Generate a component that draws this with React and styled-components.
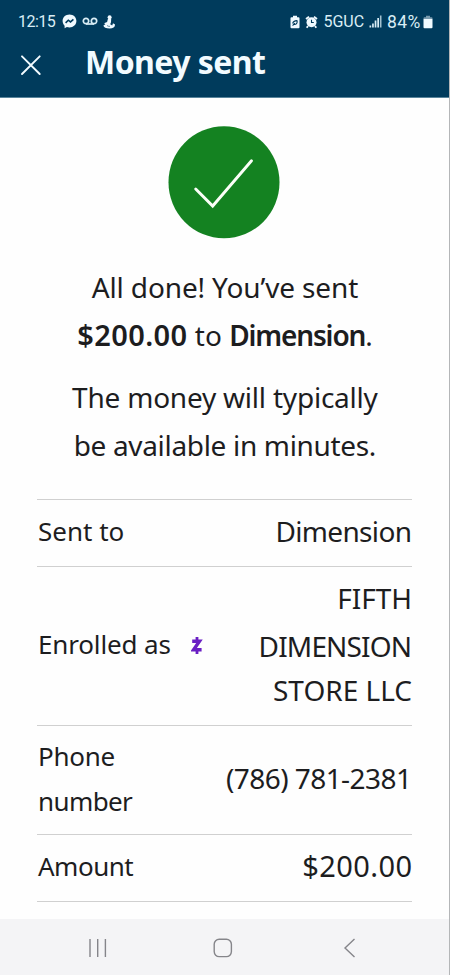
import React from "react";
import styled, { createGlobalStyle } from "styled-components";

const Global = createGlobalStyle`
  * { box-sizing: border-box; }
  body { margin: 0; background: #fefefe; }
`;

const Screen = styled.div`
  width: 450px;
  height: 975px;
  display: flex;
  flex-direction: column;
  background: #fefefe;
  border-right: 1px solid #b4b6b8;
  color: #1d1d1f;
  font-family: "Noto Sans", sans-serif;
  overflow: hidden;
`;

const Header = styled.header`
  height: 98px;
  flex: none;
  background: #003b5c;
  border-bottom: 1px solid #58849b;
  color: #f2fbff;
`;

const StatusBar = styled.div`
  height: 42px;
  padding: 1px 16px 0 18px;
  display: flex;
  align-items: center;
  justify-content: space-between;
  font-family: Roboto, sans-serif;
  color: #d9edf5;
`;

const StatusGroup = styled.div`
  display: flex;
  align-items: center;
  gap: ${(p) => p.$gap}px;
`;

const StatusText = styled.span`
  font-size: ${(p) => p.$size}px;
  letter-spacing: ${(p) => p.$ls || 0}px;
  margin-left: ${(p) => p.$ml || 0}px;
  margin-right: ${(p) => p.$mr || 0}px;
  line-height: 20px;
`;

const TitleRow = styled.div`
  height: 42px;
  display: flex;
  align-items: center;
  padding-left: 20px;
`;

const Close = styled.button`
  width: 22px;
  height: 22px;
  padding: 0;
  margin-top: 3px;
  border: 0;
  background: none;
  color: inherit;
  display: flex;
`;

const Title = styled.h1`
  margin: -3px 0 0 43px;
  font-size: 32px;
  line-height: 42px;
  font-weight: 700;
  letter-spacing: -0.55px;
  white-space: nowrap;
`;

const Content = styled.main`
  flex: 1;
  display: flex;
  flex-direction: column;
  padding: 28px 37px 0;
`;

const Badge = styled.div`
  width: 112px;
  height: 113px;
  align-self: center;
  margin-right: 1px;
  svg { display: block; }
`;

const Message = styled.p`
  margin: ${(p) => p.$top}px 0 0;
  padding-left: 1px;
  display: flex;
  flex-direction: column;
  align-items: center;
`;

const Line = styled.span`
  display: block;
  font-size: ${(p) => p.$size || 28}px;
  line-height: ${(p) => p.$lh || 48}px;
  letter-spacing: ${(p) => p.$ls || 0}px;
  margin-right: ${(p) => -(p.$ls || 0)}px;
  white-space: nowrap;
`;

const Strong = styled.strong`
  font-weight: 600;
  font-size: ${(p) => p.$size || 28}px;
  letter-spacing: ${(p) => p.$ls}px;
`;

const Details = styled.dl`
  margin: 30px 0 0;
  border-top: 1px solid #d0d0d0;
`;

const Row = styled.div`
  height: ${(p) => p.$h}px;
  display: flex;
  align-items: center;
  justify-content: space-between;
  border-bottom: 1px solid #d0d0d0;
`;

const Label = styled.dt`
  display: flex;
  align-items: center;
  gap: 20px;
  padding: 0 0 2px 1px;
`;

const Stack = styled.div`
  display: flex;
  flex-direction: column;
`;

const LabelLine = styled.span`
  display: block;
  font-size: 26px;
  line-height: 45.5px;
  letter-spacing: ${(p) => p.$ls || 0}px;
  white-space: nowrap;
`;

const Value = styled.dd`
  margin: 0;
  padding-bottom: ${(p) => p.$pb || 4}px;
  display: flex;
  flex-direction: column;
  align-items: flex-end;
`;

const NavBar = styled.nav`
  height: 56px;
  flex: none;
  background: #f4f4f6;
  display: flex;
  align-items: center;
  padding: 2px 93px 0 87px;
`;

const NavButton = styled.button`
  display: flex;
  padding: 0;
  border: 0;
  background: none;
  margin-left: ${(p) => p.$ml || 0}px;
`;

const MessengerIcon = () => (
  <svg width="15" height="15" viewBox="0 0 15 15">
    <path d="M7.500 .6C3.600.6.6 3.400.6 7.100c0 1.900.8 3.500 2 4.600v2.500l2.300-1.100c.8.200 1.700.4 2.600.4 3.900 0 6.900-2.700 6.900-6.400S11.400.6 7.500.6Z" fill="#f0faff" />
    <path d="M3.600 8.800 6.300 6.200l2.200 1.700 2.900-2.500" fill="none" stroke="#003b5c" strokeWidth="1.600" />
  </svg>
);

const VoicemailIcon = () => (
  <svg width="16" height="9" viewBox="0 0 16 9" fill="none" stroke="currentColor" strokeWidth="1.700">
    <circle cx="4" cy="4" r="2.700" />
    <circle cx="12" cy="4" r="2.700" />
    <path d="M4 7h8" />
  </svg>
);

const FigureIcon = () => (
  <svg width="12" height="14" viewBox="0 0 12 14" fill="#f0faff">
    <circle cx="6.600" cy="2.300" r="2" />
    <path d="M5 3.500h3.200l-.2 3.700-.8 2 2 1.400L10 8.200l2 1.200c.1 2.700-1.800 4.200-5.300 4.200C3 13.600.6 12.700.4 10.600l2-1.400-1.300-.9 3-1.300Z" />
    <path d="M4 10.400c1 .9 2 1.100 3 .9" fill="none" stroke="#003b5c" strokeWidth=".6" />
  </svg>
);

const BatterySaverIcon = () => (
  <svg width="10" height="14" viewBox="0 0 10 14">
    <path d="M3 .8h4v1.400h1.500q1 0 1 1v9q0 1-1 1h-7q-1 0-1-1v-9q0-1 1-1H3Z" fill="#f0faff" />
    <path d="M7.200 5.600c.2 3-1.300 4.500-3.900 3.700M2.700 8.500c.2-1.800 1.700-2.800 4.500-2.900M2.600 10.700l2.200-2.500" fill="none" stroke="#003b5c" strokeWidth="1.100" />
  </svg>
);

const AlarmIcon = () => (
  <svg width="13" height="14" viewBox="0 0 13 14">
    <path d="M1 4 4 1.600M12 4 9 1.600M3 11l-1.300 1.800M10 11l1.300 1.800" stroke="#f0faff" strokeWidth="1.800" />
    <circle cx="6.500" cy="7.300" r="5" fill="#f0faff" />
    <path d="M6.500 4.800v2.700h2.300" fill="none" stroke="#003b5c" strokeWidth="1.100" />
  </svg>
);

const SignalIcon = () => (
  <svg width="13" height="13" viewBox="0 0 13 13" fill="currentColor">
    <path d="M.5 10.500h1.700v2H.5zM3.100 8.500h1.700v4H3.100zM5.700 5.500h1.700v7H5.700zM8.300 3H10v9.500H8.300z" />
    <path d="M10.900.5h1.600v12h-1.600z" opacity=".75" />
  </svg>
);

const BatteryIcon = () => (
  <svg width="10" height="14" viewBox="0 0 10 14" fill="#f0faff">
    <path d="M3 .8h4v1.400h1.500q1 0 1 1V4H.5v-.8q0-1 1-1H3Z" opacity=".5" />
    <path d="M.5 4h9v8.200q0 1-1 1h-7q-1 0-1-1Z" />
  </svg>
);

const CloseIcon = () => (
  <svg width="22" height="22" viewBox="0 0 22 22" fill="none" stroke="currentColor" strokeWidth="1.900" strokeLinecap="round">
    <path d="M2 2.300 19.700 20M19.700 2.300 2 20" />
  </svg>
);

const SuccessIcon = () => (
  <svg width="112" height="113" viewBox="0 0 112 113">
    <ellipse cx="56" cy="56.300" rx="55.500" ry="56" fill="#148221" />
    <path d="M27.700 63 44.700 80 83.500 34.800" fill="none" stroke="#fbfff8" strokeWidth="2.900" strokeLinecap="round" />
  </svg>
);

const ZelleIcon = () => (
  <svg width="12" height="19" viewBox="0 0 12 19" fill="none" stroke="#6a1fc4">
    <path d="M1.200 5.200h7.300L2.600 13.800h8" strokeWidth="3.400" />
    <path d="M6 1v4M6 14v4" strokeWidth="2.800" />
  </svg>
);

const RecentsIcon = () => (
  <svg width="22" height="20" viewBox="0 0 22 20" stroke="#85858a" strokeWidth="1.400">
    <path d="M3 1v18M10.700 1v18M18.400 1v18" />
  </svg>
);

const HomeIcon = () => (
  <svg width="20" height="20" viewBox="0 0 20 20" fill="none" stroke="#85858a" strokeWidth="1.400">
    <rect x="1.200" y="1.200" width="17.200" height="17.400" rx="5" />
  </svg>
);

const BackIcon = () => (
  <svg width="13" height="20" viewBox="0 0 13 20" fill="none" stroke="#85858a" strokeWidth="1.400">
    <path d="M11.500 1 2 10l9.500 9" />
  </svg>
);

export default function App() {
  return (
    <Screen>
      <Global />
      <Header>
        <StatusBar>
          <StatusGroup $gap={5}>
            <StatusText $size={16} $ls={-0.5} $mr={1.5}>12:15</StatusText>
            <MessengerIcon />
            <VoicemailIcon />
            <FigureIcon />
          </StatusGroup>
          <StatusGroup $gap={5}>
            <BatterySaverIcon />
            <AlarmIcon />
            <StatusText $size={16}>5GUC</StatusText>
            <SignalIcon />
            <StatusText $size={17.5} $ls={0.3} $mr={-2.5}>84%</StatusText>
            <BatteryIcon />
          </StatusGroup>
        </StatusBar>
        <TitleRow>
          <Close aria-label="Close"><CloseIcon /></Close>
          <Title>Money sent</Title>
        </TitleRow>
      </Header>
      <Content>
        <Badge><SuccessIcon /></Badge>
        <Message $top={24}>
          <Line $ls={-0.13}>All done! You’ve sent</Line>
          <Line><Strong $size={29} $ls={0.4}>$200.00</Strong> to <Strong $ls={-1.15}>Dimension</Strong>.</Line>
        </Message>
        <Message $top={14}>
          <Line $ls={-0.22}>The money will typically</Line>
          <Line $ls={-0.33}>be available in minutes.</Line>
        </Message>
        <Details>
          <Row $h={67}>
            <Label><LabelLine>Sent to</LabelLine></Label>
            <Value><Line $ls={-0.65}>Dimension</Line></Value>
          </Row>
          <Row $h={159}>
            <Label><LabelLine $ls={-0.15}>Enrolled as</LabelLine><ZelleIcon /></Label>
            <Value $pb={7}>
              <Line>FIFTH</Line>
              <Line $ls={-0.85}>DIMENSION</Line>
              <Line $lh={41}>STORE LLC</Line>
            </Value>
          </Row>
          <Row $h={109}>
            <Label>
              <Stack>
                <LabelLine $ls={-0.3}>Phone</LabelLine>
                <LabelLine $ls={-0.6}>number</LabelLine>
              </Stack>
            </Label>
            <Value><Line $ls={-0.55}>(786) 781-2381</Line></Value>
          </Row>
          <Row $h={67}>
            <Label><LabelLine $ls={-0.5}>Amount</LabelLine></Label>
            <Value><Line $size={29} $ls={0.4}>$200.00</Line></Value>
          </Row>
        </Details>
      </Content>
      <NavBar>
        <NavButton aria-label="Recents"><RecentsIcon /></NavButton>
        <NavButton aria-label="Home" $ml={104}><HomeIcon /></NavButton>
        <NavButton aria-label="Back" $ml={110}><BackIcon /></NavButton>
      </NavBar>
    </Screen>
  );
}
